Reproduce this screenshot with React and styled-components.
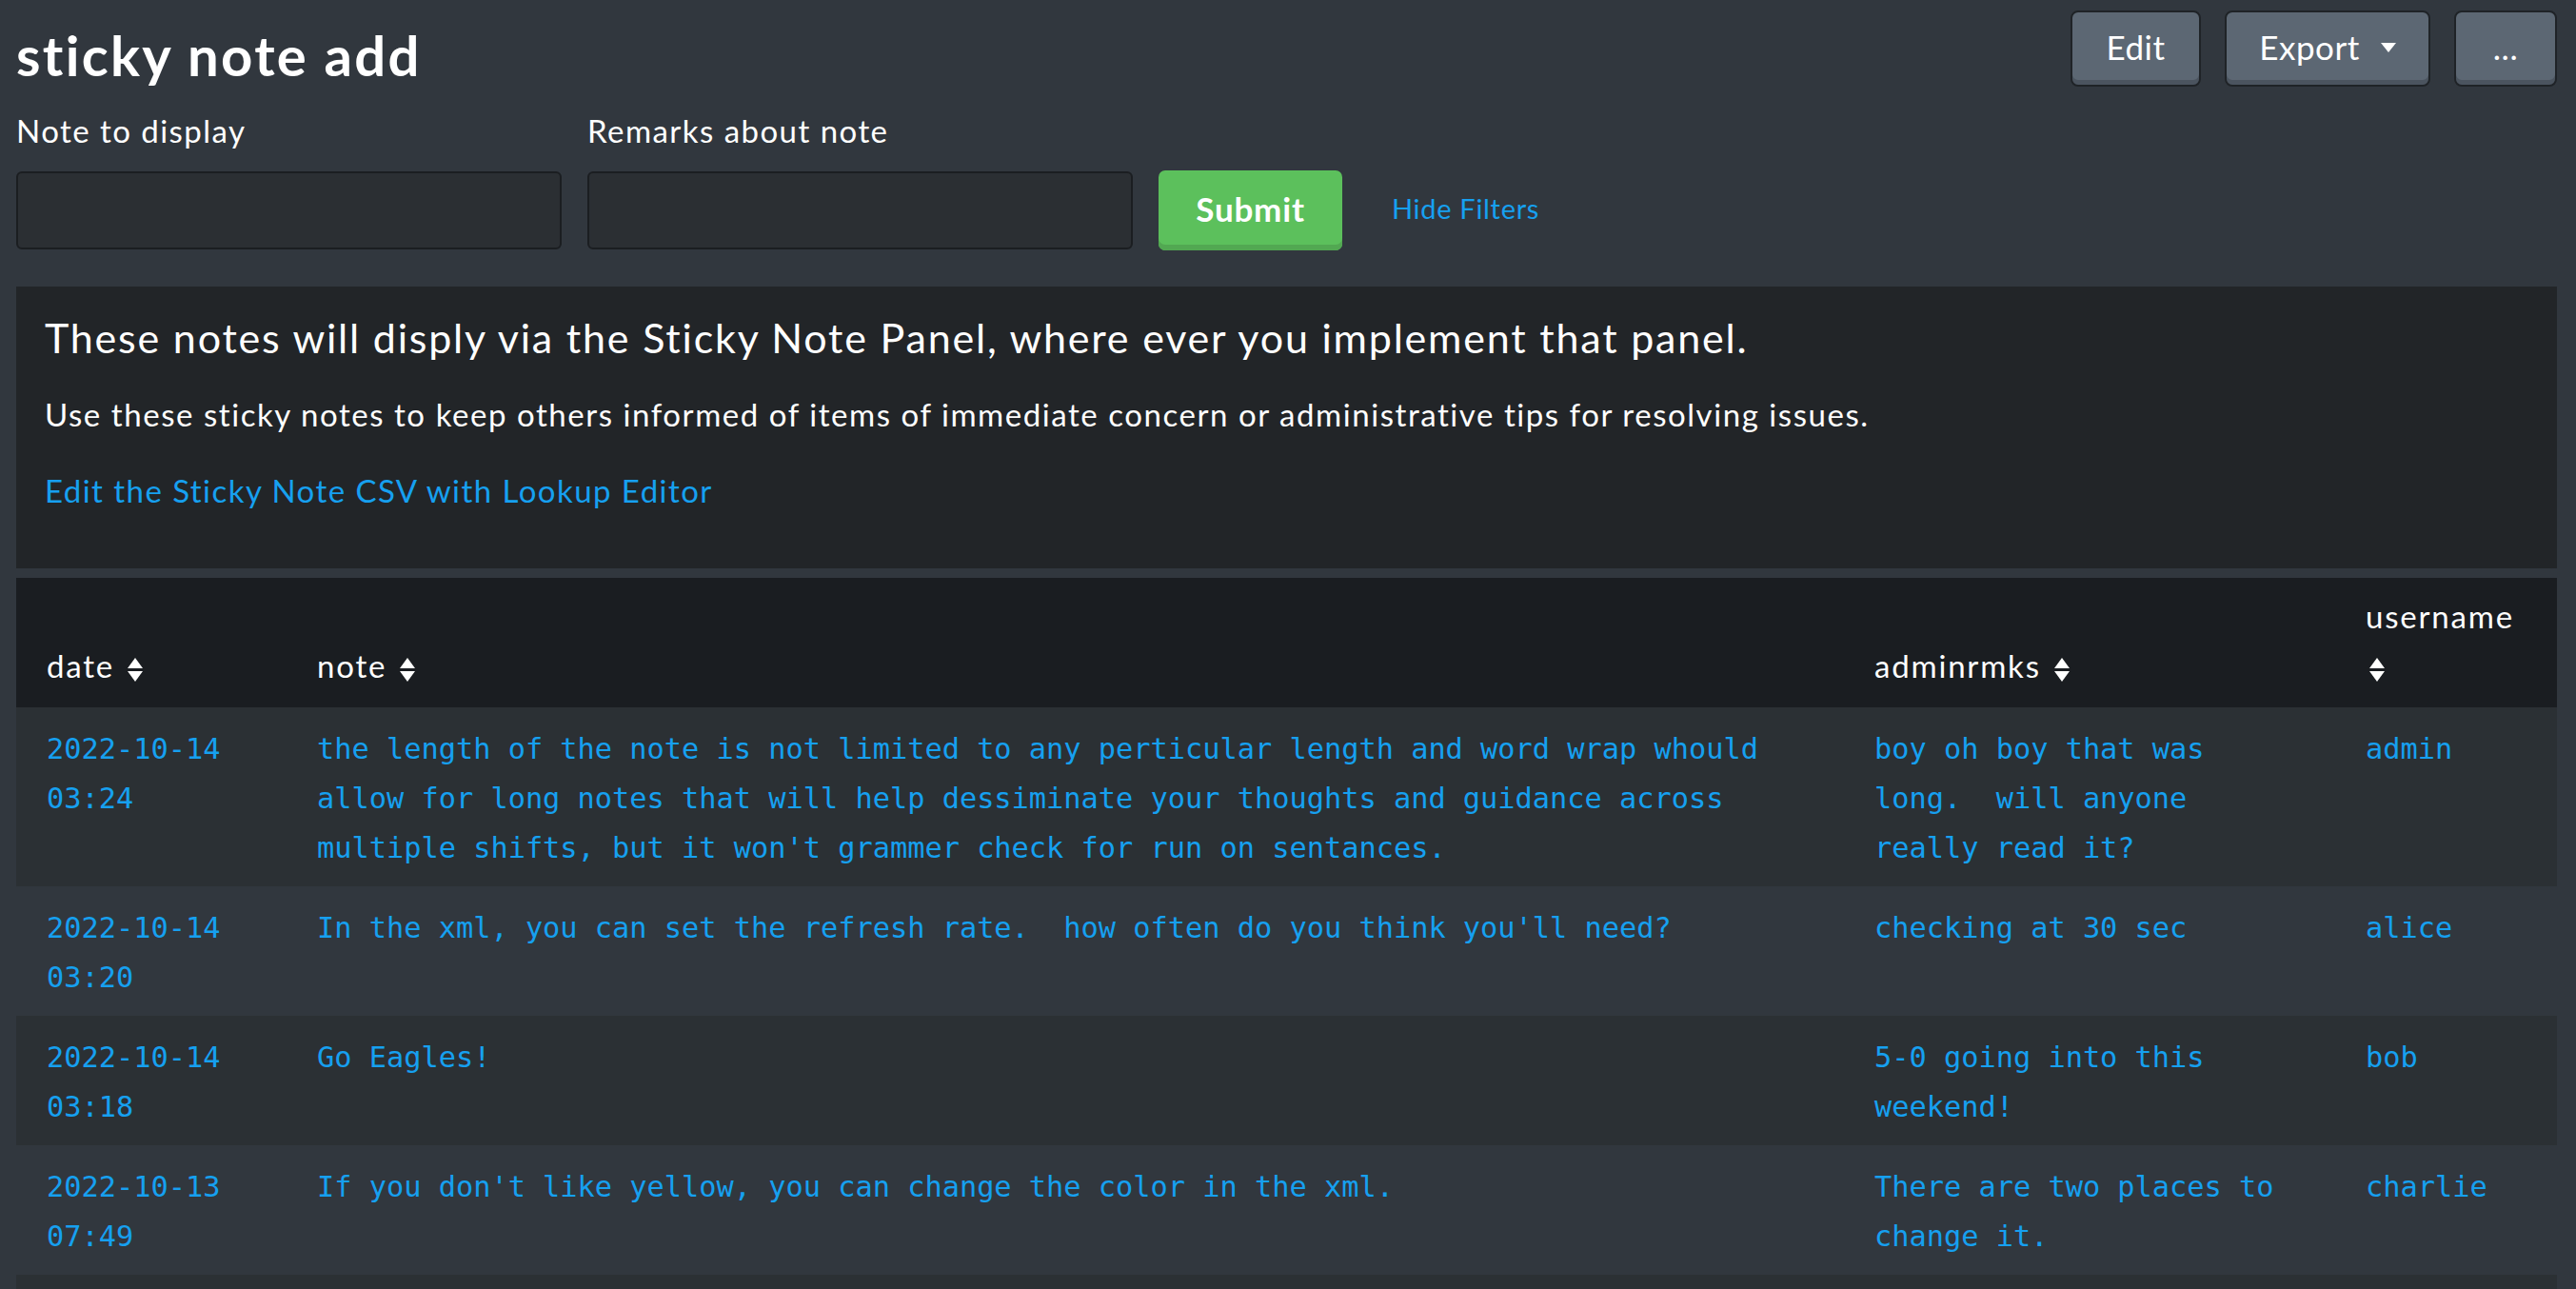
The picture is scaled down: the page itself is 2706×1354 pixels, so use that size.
import styled, { createGlobalStyle } from 'styled-components'

const GlobalStyle = createGlobalStyle`
    html, body {
        margin: 0;
        background: #31373e;
        color: #ffffff;
        font-family: Lato, "Open Sans", "Liberation Sans", sans-serif;
        letter-spacing: 1.45px;
    }
`

const Page = styled.div`
    padding: 0 20px 0 17px;
`

const TopBar = styled.div`
    display: flex;
    justify-content: space-between;
    align-items: flex-start;
`

const Title = styled.h1`
    margin: 26px 0 0 0;
    font-size: 58px;
    line-height: 64px;
    font-weight: 700;
    letter-spacing: 2.3px;
`

const Actions = styled.div`
    display: flex;
    gap: 25px;
    padding-top: 11px;
`

const ActionButton = styled.button`
    box-sizing: border-box;
    height: 80px;
    width: ${p => p.$width}px;
    display: inline-flex;
    align-items: center;
    justify-content: center;
    gap: 22px;
    background: #5c6773;
    color: #ffffff;
    border: 2px solid #1f2327;
    border-radius: 8px;
    box-shadow: inset 0 -5px 0 #4b545f;
    font: inherit;
    font-size: 35px;
    letter-spacing: 0.5px;
    padding: 0 0 4px 0;
`

const Caret = styled.span`
    width: 0;
    height: 0;
    border-left: 8px solid transparent;
    border-right: 8px solid transparent;
    border-top: 10px solid #ffffff;
    margin-top: 2px;
`

const FilterRow = styled.div`
    display: flex;
    align-items: flex-end;
    gap: 27px;
    margin-top: 26px;
`

const Field = styled.div`
    display: flex;
    flex-direction: column;
    gap: 23px;
`

const Label = styled.label`
    font-size: 33px;
    line-height: 40px;
`

const Input = styled.input`
    box-sizing: border-box;
    width: 573px;
    height: 82px;
    background: #2b2f33;
    border: 2px solid #1b1e21;
    border-radius: 6px;
    outline: none;
`

const Controls = styled.div`
    display: flex;
    align-items: center;
    gap: 52px;
    height: 84px;
    margin-bottom: -1px;
`

const SubmitButton = styled.button`
    box-sizing: border-box;
    width: 193px;
    height: 84px;
    background: #5cc05c;
    color: #ffffff;
    border: none;
    border-radius: 7px;
    box-shadow: inset 0 -6px 0 #52a852;
    font: inherit;
    font-size: 35px;
    font-weight: 700;
    letter-spacing: 0.8px;
    padding: 0 0 4px 0;
`

const Link = styled.a`
    color: #16a0f0;
    text-decoration: none;
    font-size: ${p => p.$size || 33}px;
`

const HideLink = styled(Link)`
    letter-spacing: 0.7px;
    margin-top: -5px;
`

const InfoPanel = styled.section`
    margin-top: 39px;
    background: #222528;
    padding: 28px 30px 53px 30px;
`

const Heading = styled.h2`
    margin: 0;
    font-size: 43px;
    line-height: 52px;
    font-weight: 400;
    letter-spacing: 1.8px;
`

const Paragraph = styled.p`
    margin: 32px 0 0 0;
    font-size: 33px;
    line-height: 44px;
    letter-spacing: 1.55px;
`

const LinkLine = styled.p`
    margin: 36px 0 0 0;
    line-height: 44px;
`

const TablePanel = styled.section`
    margin-top: 10px;
`

const Table = styled.table`
    width: 100%;
    border-collapse: collapse;
    table-layout: fixed;
`

const Th = styled.th`
    background: #1a1d21;
    text-align: left;
    vertical-align: bottom;
    font-weight: 400;
    font-size: 33px;
    line-height: 52px;
    letter-spacing: 1.8px;
    padding: 14px 32px 18px 32px;
    height: 136px;
    box-sizing: border-box;
`

const Row = styled.tr`
    background: ${p => (p.$odd ? '#2b3034' : '#31373e')};
`

const Td = styled.td`
    vertical-align: top;
    padding: 18px 48px 14px 32px;
    font-family: "DejaVu Sans Mono", "Liberation Mono", monospace;
    font-size: 30.3px;
    line-height: 52px;
    letter-spacing: normal;
    color: #16a0f0;
    white-space: pre-wrap;
    word-break: normal;
`

const SortIcon = () => (
    <svg width='18' height='26' viewBox='0 0 18 26' style={{ verticalAlign: '-5px', marginLeft: 3 }}>
        <path d='M9 0 L17 11 L1 11 Z' fill='#ffffff' />
        <path d='M1 14 L17 14 L9 25 Z' fill='#ffffff' />
    </svg>
)

const rows = [
    {
        date: '2022-10-14 03:24',
        note: 'the length of the note is not limited to any perticular length and word wrap whould allow for long notes that will help dessiminate your thoughts and guidance across multiple shifts, but it won\'t grammer check for run on sentances.',
        admin: 'boy oh boy that was long.  will anyone really read it?',
        user: 'admin',
    },
    {
        date: '2022-10-14 03:20',
        note: 'In the xml, you can set the refresh rate.  how often do you think you\'ll need?',
        admin: 'checking at 30 sec',
        user: 'alice',
    },
    {
        date: '2022-10-14 03:18',
        note: 'Go Eagles!',
        admin: '5-0 going into this weekend!',
        user: 'bob',
    },
    {
        date: '2022-10-13 07:49',
        note: 'If you don\'t like yellow, you can change the color in the xml.',
        admin: 'There are two places to change it.',
        user: 'charlie',
    },
    { date: '', note: '', admin: '', user: '' },
]

export default function App() {
    return (
        <Page>
            <GlobalStyle />
            <TopBar>
                <Title>sticky note add</Title>
                <Actions>
                    <ActionButton $width={137}>Edit</ActionButton>
                    <ActionButton $width={216}>
                        <span>Export</span>
                        <Caret />
                    </ActionButton>
                    <ActionButton $width={108}>...</ActionButton>
                </Actions>
            </TopBar>
            <FilterRow>
                <Field>
                    <Label>Note to display</Label>
                    <Input />
                </Field>
                <Field>
                    <Label>Remarks about note</Label>
                    <Input />
                </Field>
                <Controls>
                    <SubmitButton>Submit</SubmitButton>
                    <HideLink href='#' $size={29}>Hide Filters</HideLink>
                </Controls>
            </FilterRow>
            <InfoPanel>
                <Heading>These notes will disply via the Sticky Note Panel, where ever you implement that panel.</Heading>
                <Paragraph>Use these sticky notes to keep others informed of items of immediate concern or administrative tips for resolving issues.</Paragraph>
                <LinkLine>
                    <Link href='#'>Edit the Sticky Note CSV with Lookup Editor</Link>
                </LinkLine>
            </InfoPanel>
            <TablePanel>
                <Table>
                    <colgroup>
                        <col style={{ width: 284 }} />
                        <col style={{ width: 1636 }} />
                        <col style={{ width: 516 }} />
                        <col style={{ width: 233 }} />
                    </colgroup>
                    <thead>
                        <tr>
                            <Th>date <SortIcon /></Th>
                            <Th>note <SortIcon /></Th>
                            <Th>adminrmks <SortIcon /></Th>
                            <Th>username <SortIcon /></Th>
                        </tr>
                    </thead>
                    <tbody>
                        {rows.map((r, i) => (
                            <Row key={i} $odd={i % 2 === 0}>
                                <Td>{r.date}</Td>
                                <Td>{r.note}</Td>
                                <Td>{r.admin}</Td>
                                <Td>{r.user}</Td>
                            </Row>
                        ))}
                    </tbody>
                </Table>
            </TablePanel>
        </Page>
    )
}
